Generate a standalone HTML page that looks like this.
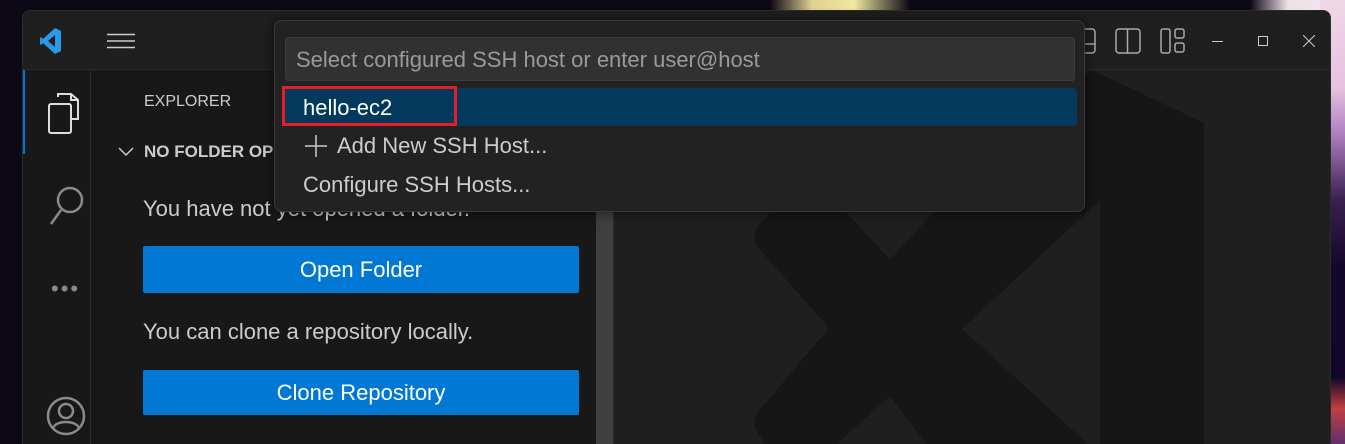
<!DOCTYPE html>
<html><head><style>
*{margin:0;padding:0;box-sizing:border-box}
html,body{width:1345px;height:444px;overflow:hidden}
body{background:#0c0816;font-family:"Liberation Sans",sans-serif;position:relative}
.abs{position:absolute}
.bgr{left:1320px;top:0;width:25px;height:444px;background:linear-gradient(180deg,#f0d8e8 0%,#e6c0e0 20%,#b080c0 30%,#3a2050 45%,#14082a 60%,#12062a 85%,#c04040 92%,#603070 100%)}
.bgt{left:770px;top:0;width:140px;height:10px;background:linear-gradient(90deg,#0c0816,#e0d090 30%,#f0e8a0 60%,#0c0816)}
.bgt2{left:1250px;top:0;width:95px;height:40px;background:linear-gradient(90deg,#0c0816,#f0e0e8 40%,#f4e8f0)}
.win{left:22px;top:10px;width:1309px;height:434px;background:#1f1f1f;border-radius:8px 8px 0 0;overflow:hidden;border:1px solid #2b2b2b;border-bottom:none}
.title{left:0;top:0;width:1309px;height:59px;background:#1f1f1f;border-bottom:1px solid #2b2b2b}
.act{left:0;top:59px;width:68px;height:375px;background:#181818;border-right:1px solid #2b2b2b}
.side{left:68px;top:59px;width:523px;height:375px;background:#181818;border-right:1px solid #2b2b2b}
.txt{color:#cccccc;font-size:22px;white-space:nowrap}
.btn{background:#0078d4;color:#fff;font-size:22px;text-align:center;border-radius:2px}
.pop{left:274px;top:20px;width:811px;height:192px;background:#222222;border:1px solid #3a3a3a;border-radius:8px;box-shadow:0 0 12px rgba(0,0,0,.6)}
.pt{color:#ccc;font-size:22px;white-space:nowrap}
</style></head><body>
<div class="abs bgt"></div><div class="abs bgt2"></div><div class="abs bgr"></div>
<div class="abs win">
 <div class="abs title">
  <svg class="abs" style="left:17px;top:16px" width="22" height="28" viewBox="0 0 22 28"><path d="M15 1 L21 4 V24 L15 27 L3 16 L1 18 L0 17 V11 L1 10 L3 12 L15 1Z M15 8 L8 14 L15 20Z" fill="#2a9ae8" fill-rule="evenodd"/></svg>
  <svg class="abs" style="left:83px;top:22px" width="30" height="16"><path d="M1 1.5H29M1 8H29M1 14.5H29" stroke="#ccc" stroke-width="1.5"/></svg>
  <svg class="abs" style="left:1047px;top:17px" width="26" height="26" fill="none" stroke="#aaa" stroke-width="1.5"><rect x="1" y="1" width="24" height="24" rx="3"/><path d="M1 16H25"/></svg>
  <svg class="abs" style="left:1092px;top:17px" width="26" height="26" fill="none" stroke="#aaa" stroke-width="1.5"><rect x="1" y="1" width="24" height="24" rx="3"/><path d="M12.5 1V25"/></svg>
  <svg class="abs" style="left:1137px;top:17px" width="26" height="26" fill="none" stroke="#aaa" stroke-width="1.5"><rect x="1" y="1" width="9" height="24" rx="2"/><rect x="15" y="1" width="9" height="9" rx="2"/><rect x="15" y="15" width="9" height="9" rx="2"/></svg>
  <div class="abs" style="left:1189px;top:30px;width:11px;height:1px;background:#ccc"></div>
  <div class="abs" style="left:1235px;top:25px;width:10px;height:10px;border:1px solid #ccc"></div>
  <svg class="abs" style="left:1280px;top:24px" width="12" height="12"><path d="M0 0L12 12M12 0L0 12" stroke="#ccc"/></svg>
 </div>
 <div class="abs act">
  <div class="abs" style="left:0;top:0;width:2px;height:84px;background:#0078d4"></div>
  <svg class="abs" style="left:24px;top:22px" width="38" height="44" fill="none" stroke="#ddd" stroke-width="2"><path d="M11 5V2H24L31 8V27H24"/><path d="M24 2V8H31"/><rect x="2" y="12" width="22" height="29" rx="2"/></svg>
  <svg class="abs" style="left:26px;top:115px" width="36" height="42" fill="none" stroke="#8a8a8a" stroke-width="2.5"><circle cx="21" cy="15" r="12"/><path d="M12 25L2 39"/></svg>
  <div class="abs" style="left:28px;top:206px;color:#8a8a8a;font-size:22px;letter-spacing:2px">•••</div>
  <svg class="abs" style="left:22px;top:325px" width="42" height="42" fill="none" stroke="#8a8a8a" stroke-width="2.5"><circle cx="21" cy="21" r="18"/><circle cx="21" cy="16" r="7"/><path d="M8 33C11 25 31 25 34 33"/></svg>
 </div>
 <div class="abs side">
  <div class="abs txt" style="left:53px;top:23px;font-size:16px">EXPLORER</div>
  <svg class="abs" style="left:27px;top:77px" width="16" height="10"><path d="M1 1L8 8L15 1" stroke="#ccc" stroke-width="1.5" fill="none"/></svg>
  <div class="abs txt" style="left:53px;top:72px;font-size:17px;font-weight:bold">NO FOLDER OPENED</div>
  <div class="abs txt" style="left:52px;top:126px">You have not yet opened a folder.</div>
  <div class="abs btn" style="left:52px;top:176px;width:436px;height:47px;line-height:47px">Open Folder</div>
  <div class="abs txt" style="left:52px;top:249px">You can clone a repository locally.</div>
  <div class="abs btn" style="left:52px;top:300px;width:436px;height:45px;line-height:45px">Clone Repository</div>
  <div class="abs" style="left:505px;top:130px;width:17px;height:268px;background:#3f3f3f"></div>
 </div>
 <svg class="abs" style="left:0;top:0" width="1309" height="434"><g transform="translate(-22,-10)" fill="#161616">
  <path d="M1093,70 L1203,122 L1203,450 L931,450 L889,395 L808,468 Q797,476 785,466 L760,437 Q748,422 758,410 L828,327 L760,250 Q748,236 758,224 L780,200 Z"/>
  <path d="M845,211 L889,259 L933,211Z M961,328 L1099,199 L1099,454Z" fill="#1f1f1f"/>
 </g></svg>
</div>
<div class="abs pop">
 <div class="abs" style="left:10px;top:16px;width:790px;height:44px;background:#313131;border:1px solid #3c3c3c;border-radius:3px"></div>
 <div class="abs" style="left:21px;top:26px;color:#9a9a9a;font-size:22px;white-space:nowrap">Select configured SSH host or enter user@host</div>
 <div class="abs" style="left:7px;top:67px;width:795px;height:38px;background:#04395e;border-radius:4px"></div>
 <div class="abs" style="left:7px;top:65px;width:175px;height:40px;border:3px solid #e81c24"></div>
 <div class="abs" style="left:28px;top:74px;color:#fff;font-size:22px">hello-ec2</div>
 <svg class="abs" style="left:30px;top:114px" width="22" height="22"><path d="M11 0V22M0 11H22" stroke="#ccc" stroke-width="1.5"/></svg>
 <div class="abs pt" style="left:62px;top:112px">Add New SSH Host...</div>
 <div class="abs pt" style="left:28px;top:151px">Configure SSH Hosts...</div>
</div>
</body></html>
